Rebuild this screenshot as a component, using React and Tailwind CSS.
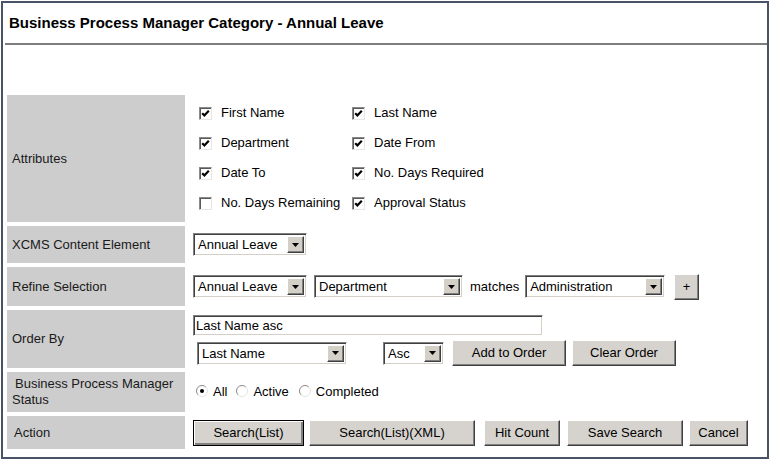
import React from 'react';

// classic windows-ish form widgets, drawn with divs so they look the same everywhere
const DropBtn = () => (
  <span className="flex h-full w-[17px] shrink-0 items-center justify-center border border-t-white border-l-white border-r-[#404040] border-b-[#404040] bg-[#d4d0c8] shadow-[inset_-1px_-1px_0_#808080]">
    <svg width="7" height="4" viewBox="0 0 7 4">
      <path d="M0 0h7L3.5 4z" fill="#000" />
    </svg>
  </span>
);

const Select = ({ value, w }) => (
  <div className={`flex h-[23px] shrink-0 items-stretch border border-[#808080] border-r-white border-b-white bg-white p-[2px] shadow-[inset_1px_1px_0_#404040,inset_-1px_-1px_0_#d4d0c8] ${w}`}>
    <span className="flex-1 overflow-hidden whitespace-nowrap pl-[2px] leading-[17px]">{value}</span>
    <DropBtn />
  </div>
);

const Btn = ({ children, w, primary }) => (
  <div
    className={`flex h-[26px] shrink-0 items-center justify-center bg-[#d6d3ce] ${
      primary
        ? 'border border-black shadow-[inset_1px_1px_0_#fff,inset_-2px_-2px_0_#808080]'
        : 'border border-t-white border-l-white border-r-[#404040] border-b-[#404040] shadow-[inset_-1px_-1px_0_#808080]'
    } ${w}`}
  >
    {children}
  </div>
);

const Check = ({ checked = true, label }) => (
  <div className="flex h-[30px] items-center gap-[9px]">
    <span className="flex h-[13px] w-[13px] shrink-0 items-center justify-center border border-[#8a8a8a] border-r-[#e6e6e6] border-b-[#e6e6e6] bg-white shadow-[inset_1px_1px_0_#5a5a5a]">
      {checked && (
        <svg width="9" height="9" viewBox="0 0 9 9">
          <path d="M1.2 4.2l2.2 2.2 4.4-4.6" stroke="#000" strokeWidth="2.2" fill="none" />
        </svg>
      )}
    </span>
    <span>{label}</span>
  </div>
);

const Radio = ({ checked, label, className = '' }) => (
  <div className={`flex items-center ${className}`}>
    <svg width="12" height="12" viewBox="0 0 12 12" className="-mt-[3px]">
      <circle cx="6" cy="6" r="5.5" fill="#fff" />
      <path d="M2.1 9.9A5.5 5.5 0 0 1 9.9 2.1" stroke="#8c8c8c" strokeWidth="1" fill="none" />
      <path d="M9.9 2.1A5.5 5.5 0 0 1 2.1 9.9" stroke="#e4e4e4" strokeWidth="1" fill="none" />
      {checked && <circle cx="6" cy="6" r="2" fill="#000" />}
    </svg>
    <span className="ml-[5px]">{label}</span>
  </div>
);

const Label = ({ children, h }) => (
  <div className={`flex items-center bg-[#cdcdcd] pl-[5px] leading-[16px] text-[#1a1a1a] ${h}`}>{children}</div>
);

export default function App() {
  return (
    <div className="h-[461px] w-[771px] bg-white pl-[1px] pt-[1px] font-['Liberation_Sans',Arial,sans-serif] text-[13px] text-black">
      <div className="flex h-[458px] w-[768px] flex-col border-2 border-[#4a5366]">
        {/* header */}
        <div className="flex h-[40px] items-center pl-[6px] text-[15px] font-bold">
          Business Process Manager Category - Annual Leave
        </div>
        <div className="ml-[2px] border-t-2 border-[#7d7d7d]" />
        <div className="h-[50px]" />

        {/* form table */}
        <div className="grid grid-cols-[178px_1fr] gap-x-[8px] gap-y-[4px] pl-[4px]">
          <Label h="h-[127px]">Attributes</Label>
          <div className="grid grid-cols-[153px_auto] content-start pl-[6px] pt-[3px]">
            <Check label="First Name" />
            <Check label="Last Name" />
            <Check label="Department" />
            <Check label="Date From" />
            <Check label="Date To" />
            <Check label="No. Days Required" />
            <Check checked={false} label="No. Days Remaining" />
            <Check label="Approval Status" />
          </div>

          <Label h="h-[37px]">XCMS Content Element</Label>
          <div className="flex items-center">
            <Select value="Annual Leave" w="w-[114px]" />
          </div>

          <Label h="h-[39px]">Refine Selection</Label>
          <div className="flex items-center">
            <Select value="Annual Leave" w="w-[114px]" />
            <div className="ml-[7px]">
              <Select value="Department" w="w-[149px]" />
            </div>
            <span className="ml-[7px]">matches</span>
            <div className="ml-[6px]">
              <Select value="Administration" w="w-[140px]" />
            </div>
            <div className="ml-[9px]">
              <Btn w="w-[25px]">+</Btn>
            </div>
          </div>

          <Label h="h-[58px]">Order By</Label>
          <div className="flex flex-col pt-[5px]">
            <div className="flex h-[21px] w-[350px] items-center border border-[#808080] border-r-white border-b-white bg-white pl-[2px] shadow-[inset_1px_1px_0_#404040,inset_-1px_-1px_0_#d4d0c8]">
              Last Name asc
            </div>
            <div className="mt-[4px] flex h-[26px] items-center">
              <div className="ml-[4px]">
                <Select value="Last Name" w="w-[150px]" />
              </div>
              <div className="ml-[36px]">
                <Select value="Asc" w="w-[61px]" />
              </div>
              <div className="ml-[8px]">
                <Btn w="w-[114px]">Add to Order</Btn>
              </div>
              <div className="ml-[6px]">
                <Btn w="w-[104px]">Clear Order</Btn>
              </div>
            </div>
          </div>

          <Label h="h-[40px]">
            <span>
              <span className="pl-[3px]">Business Process Manager</span>
              <br />
              Status
            </span>
          </Label>
          <div className="flex items-center pl-[3px]">
            <Radio checked label="All" />
            <Radio label="Active" className="ml-[9px]" />
            <Radio label="Completed" className="ml-[10px]" />
          </div>

          <Label h="h-[33px]">
            <span className="pl-[2px]">Action</span>
          </Label>
          <div className="flex items-center">
            <Btn primary w="w-[111px]">Search(List)</Btn>
            <div className="ml-[5px]">
              <Btn w="w-[166px]">Search(List)(XML)</Btn>
            </div>
            <div className="ml-[9px]">
              <Btn w="w-[76px]">Hit Count</Btn>
            </div>
            <div className="ml-[7px]">
              <Btn w="w-[116px]">Save Search</Btn>
            </div>
            <div className="ml-[6px]">
              <Btn w="w-[59px]">Cancel</Btn>
            </div>
          </div>
        </div>
      </div>
    </div>
  );
}
